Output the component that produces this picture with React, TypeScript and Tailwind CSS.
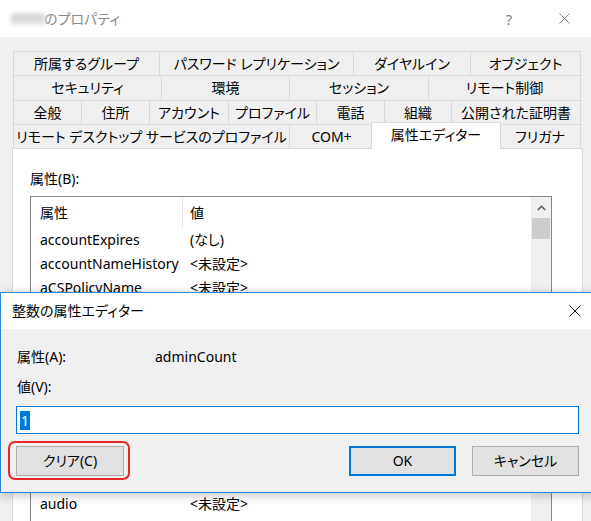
import React from "react";

const FONT =
  "font-['Noto_Sans','Noto_Sans_CJK_JP',sans-serif] [font-feature-settings:'palt']";

type Tab = { label: string; w: string; sel?: boolean };

const tabRows: { h: string; tabs: Tab[] }[] = [
  {
    h: "h-[24px]",
    tabs: [
      { label: "所属するグループ", w: "w-[146px]" },
      { label: "パスワード レプリケーション", w: "w-[194px]" },
      { label: "ダイヤルイン", w: "w-[117px]" },
      { label: "オブジェクト", w: "w-[111px]" },
    ],
  },
  {
    h: "h-[25px]",
    tabs: [
      { label: "セキュリティ", w: "w-[148px]" },
      { label: "環境", w: "w-[128px]" },
      { label: "セッション", w: "w-[139px]" },
      { label: "リモート制御", w: "w-[153px]" },
    ],
  },
  {
    h: "h-[24px]",
    tabs: [
      { label: "全般", w: "w-[68px]" },
      { label: "住所", w: "w-[68px]" },
      { label: "アカウント", w: "w-[79px]" },
      { label: "プロファイル", w: "w-[88px]" },
      { label: "電話", w: "w-[68px]" },
      { label: "組織", w: "w-[67px]" },
      { label: "公開された証明書", w: "w-[130px]" },
    ],
  },
  {
    h: "h-[24px]",
    tabs: [
      { label: "リモート デスクトップ サービスのプロファイル", w: "w-[276px]" },
      { label: "COM+", w: "w-[84px]" },
      { label: "属性エディター", w: "w-[130px]", sel: true },
      { label: "フリガナ", w: "w-[82px]" },
    ],
  },
];

const attrs: [string, string][] = [
  ["accountExpires", "(なし)"],
  ["accountNameHistory", "<未設定>"],
  ["aCSPolicyName", "<未設定>"],
  ["adminCount", "1"],
  ["adminDescription", "<未設定>"],
  ["adminDisplayName", "<未設定>"],
  ["altRecipient", "<未設定>"],
  ["altRecipientBL", "<未設定>"],
  ["altSecurityIdentities", "<未設定>"],
  ["assistant", "<未設定>"],
  ["attributeCertificateAttribute", "<未設定>"],
  ["audio", "<未設定>"],
  ["authOrig", "<未設定>"],
  ["badPasswordTime", "<未設定>"],
];

function CloseIcon({ size, color }: { size: number; color: string }) {
  return (
    <svg width={size} height={size} viewBox={`0 0 ${size} ${size}`}>
      <path
        d={`M0.5 0.5L${size - 0.5} ${size - 0.5}M${size - 0.5} 0.5L0.5 ${size - 0.5}`}
        stroke={color}
        strokeWidth="1"
        fill="none"
      />
    </svg>
  );
}

export default function App() {
  return (
    <div
      className={`relative w-[591px] h-[521px] overflow-hidden bg-[#f0f0f0] text-black text-[14px] leading-[20px] ${FONT}`}
    >
      {/* Main window title bar */}
      <div className="h-[37px] bg-white flex items-center pl-[11px] pr-[21px]">
        <div className="w-[34px] h-[11px] rounded-[3px] bg-[#d9d9d9] blur-[2px]" />
        <span className="text-[#8a8a8a] -ml-[1px]">のプロパティ</span>
        <span className="ml-auto w-[20px] text-center text-[#8a8a8a] text-[15px]">?</span>
        <div className="ml-[40px] flex items-center">
          <CloseIcon size={11} color="#8a8a8a" />
        </div>
      </div>

      {/* Tabs */}
      <div className="pt-[14px] pl-[13px]">
        {tabRows.map((row, ri) => (
          <div key={ri} className={`flex ${row.h}`}>
            {row.tabs.map((t, ti) => {
              const last = ti === row.tabs.length - 1;
              if (t.sel) {
                return (
                  <div
                    key={ti}
                    className={`relative z-10 ${t.w} -mx-[2px] -mt-[2px] h-[27px] bg-white border-t border-l border-r border-[#d9d9d9] flex items-center justify-center pb-[2px] whitespace-nowrap`}
                  >
                    {t.label}
                  </div>
                );
              }
              return (
                <div
                  key={ti}
                  className={`${t.w} h-full border-t border-l ${last ? "border-r" : ""} border-[#d9d9d9] flex items-center justify-center whitespace-nowrap`}
                >
                  {t.label}
                </div>
              );
            })}
          </div>
        ))}
      </div>

      {/* Tab panel */}
      <div className="ml-[12px] w-[571px] h-[400px] bg-white border border-[#d9d9d9] pl-[17px] pt-[20px]">
        <div className="h-[20px] flex items-center">属性(B):</div>
        <div className="mt-[7px] w-[522px] h-[340px] border border-[#828790] flex">
          <div className="flex-1 flex flex-col">
            <div className="h-[31px] flex items-center shrink-0">
              <div className="w-[152px] h-full pl-[9px] border-r border-[#e5e5e5] flex items-center">
                属性
              </div>
              <div className="pl-[7px]">値</div>
            </div>
            {attrs.map(([n, v], i) => (
              <div key={i} className="h-[24px] shrink-0 flex items-center whitespace-nowrap">
                <div className="w-[152px] pl-[9px] overflow-hidden">{n}</div>
                <div className="pl-[7px]">{v}</div>
              </div>
            ))}
          </div>
          <div className="w-[20px] bg-[#f0f0f0] flex flex-col">
            <div className="h-[21px] flex items-center justify-center">
              <svg width="9" height="6" viewBox="0 0 9 6">
                <path d="M0.8 5L4.5 1.3L8.2 5" stroke="#606060" strokeWidth="1.6" fill="none" />
              </svg>
            </div>
            <div className="mx-[1px] h-[21px] bg-[#cdcdcd]" />
          </div>
        </div>
      </div>

      {/* Integer attribute editor dialog */}
      <div className="absolute left-0 top-[292px] w-[596px] border border-[#2b88d8] bg-[#f0f0f0] shadow-[0_2px_10px_rgba(0,0,0,0.25)]">
        <div className="h-[36px] bg-white flex items-center pl-[11px] pr-[14px]">
          <span>整数の属性エディター</span>
          <div className="ml-auto flex items-center">
            <CloseIcon size={12} color="#1a1a1a" />
          </div>
        </div>
        <div className="px-[15px] pt-[18px] pb-[16px]">
          <div className="h-[20px] flex items-center">
            <div className="w-[139px] pl-[1px]">属性(A):</div>
            <div>adminCount</div>
          </div>
          <div className="mt-[10px] h-[20px] flex items-center pl-[1px]">値(V):</div>
          <div className="mt-[9px] w-[563px] h-[28px] bg-white border border-[#0078d7] flex items-center pl-[3px]">
            <span className="bg-[#0078d7] text-white h-[19px] leading-[19px] px-[1px]">1</span>
          </div>
          <div className="mt-[12px] w-[563px] h-[30px] flex">
            <div className="relative w-[108px] h-full">
              <div className="w-full h-full bg-[#e1e1e1] border border-[#adadad] flex items-center justify-center">
                クリア(C)
              </div>
              <div className="absolute -left-[8px] -top-[5px] w-[122px] h-[39px] border-2 border-[#e8262a] rounded-[7px]" />
            </div>
            <div className="ml-auto w-[107px] h-full bg-[#e1e1e1] border-2 border-[#0078d7] flex items-center justify-center">
              OK
            </div>
            <div className="ml-[16px] w-[107px] h-full bg-[#e1e1e1] border border-[#adadad] flex items-center justify-center">
              キャンセル
            </div>
          </div>
        </div>
      </div>
    </div>
  );
}
